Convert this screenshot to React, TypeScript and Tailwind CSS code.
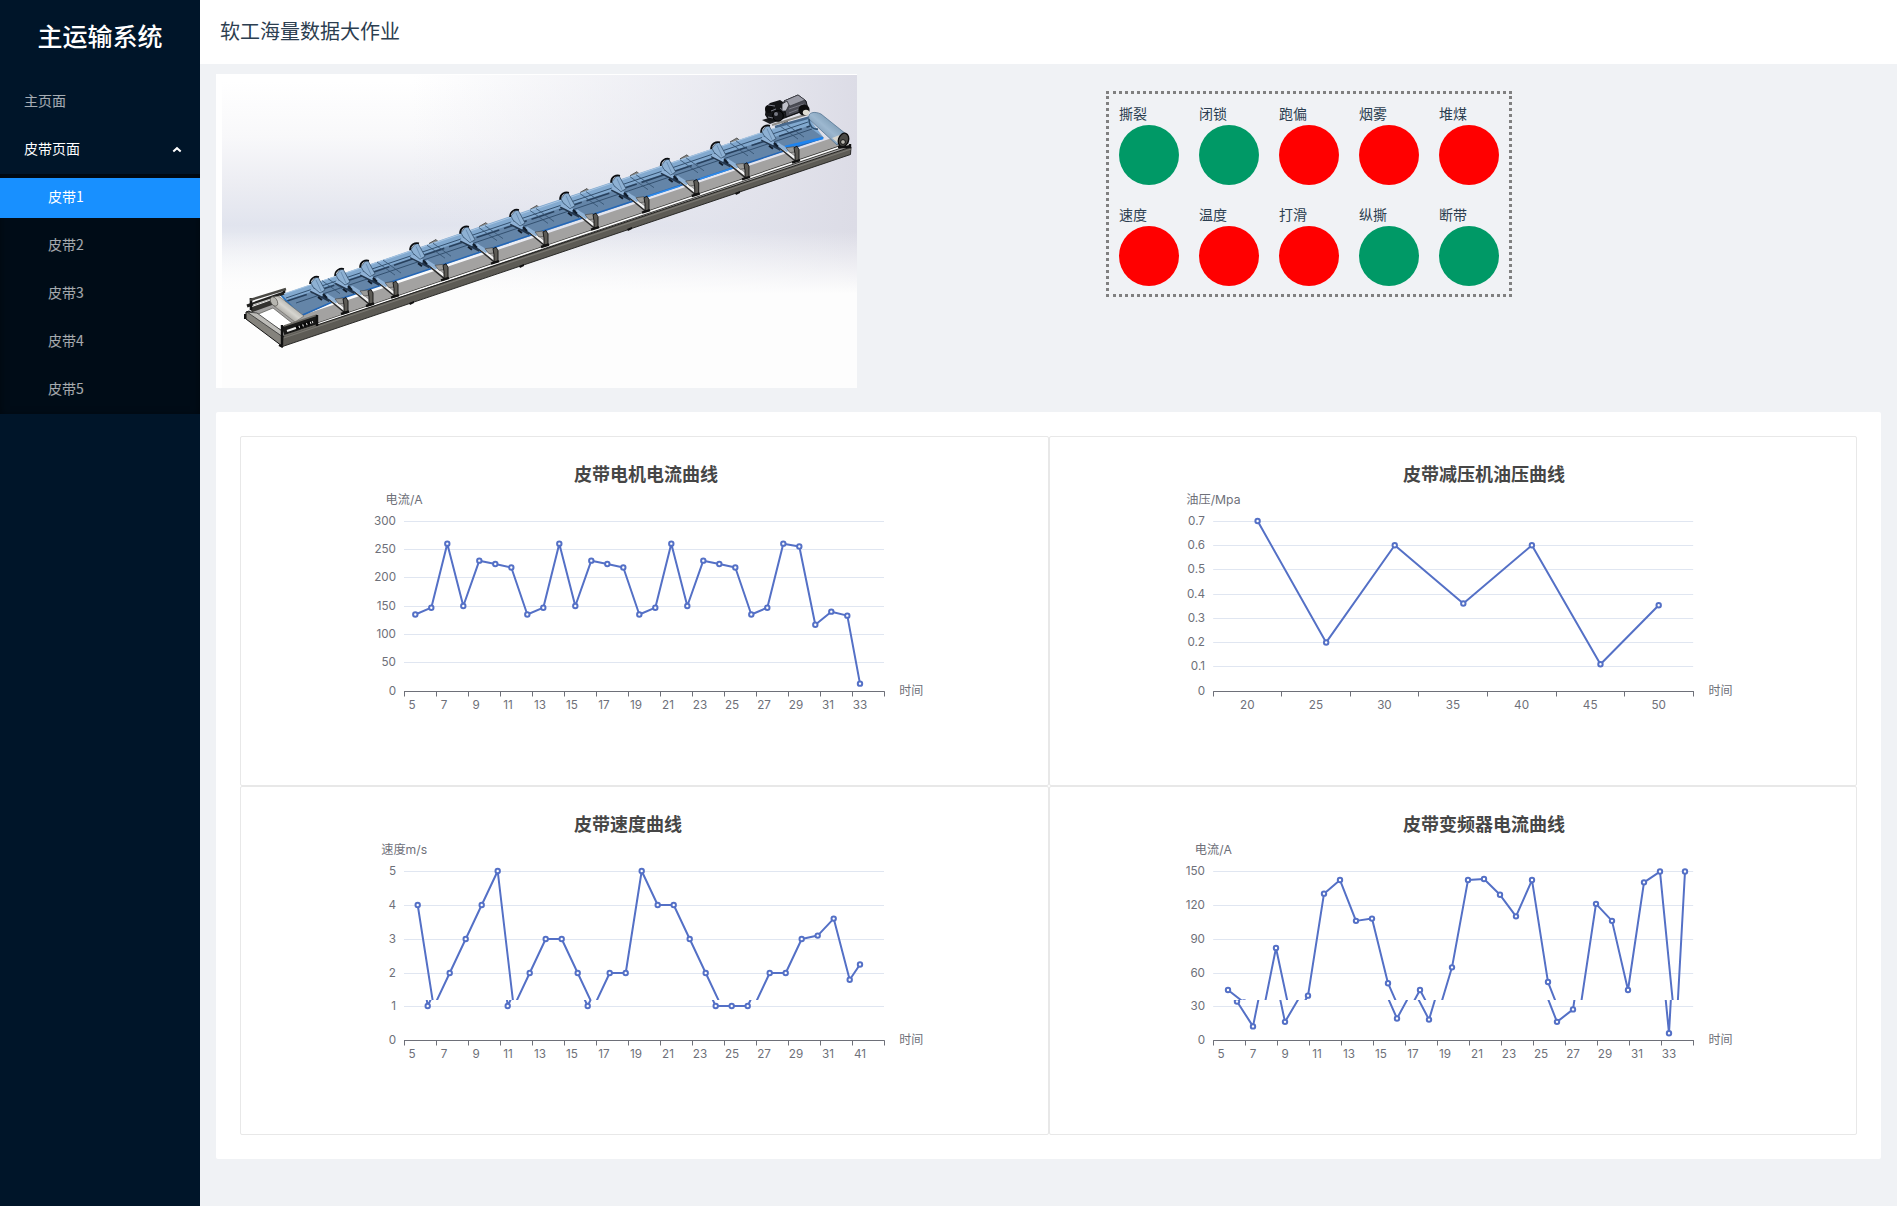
import React from "react";

type Pt = [number, number];

const AXIS = "#6E7079";
const LINE = "#5470C6";

interface ChartProps {
  id: string;
  title: string;
  yName: string;
  ox: number;
  oy: number;
  left: number;
  titleX: number;
  base: number;
  yLabels: string[];
  gridY: number[];
  labelRight: number;
  xLabels: string[];
  step: number;
  firstLabel: number;
  points: Pt[];
  seam?: { y: number; dx: number; dy: number };
}

function Series({ points }: { points: Pt[] }) {
  return (
    <g>
      <polyline points={points.map((p) => p.join(",")).join(" ")} fill="none" stroke={LINE} strokeWidth={2} strokeLinejoin="bevel" />
      {points.map(([x, y], i) => (
        <circle key={i} cx={x} cy={y} r={2.2} fill="#fff" stroke={LINE} strokeWidth={2} />
      ))}
    </g>
  );
}

function Chart(p: ChartProps) {
  const right = p.left + 480;
  const ticks = p.xLabels.map((_, i) => p.left + i * p.step).concat(right);
  const h = p.seam ? 347 : 348;
  return (
    <svg className="block shrink-0" width={806} height={h} viewBox={`${p.ox} ${p.oy} 806 ${h}`}
      fontFamily='Inter, "Noto Sans CJK SC", sans-serif' fontSize={12} fill={AXIS}>
      <text x={p.titleX + 0.3} y={p.oy + 44} fontSize={18} fontWeight={700} fill="#464646" fontFamily='"Noto Sans CJK SC", sans-serif'>
        {p.title}
      </text>
      <text x={p.left + 0.2} y={p.oy + 67} textAnchor="middle" fontSize={12.2}>{p.yName}</text>
      {p.gridY.map((y, i) => (
        <g key={i}>
          {i > 0 && <path d={`M${p.left} ${y + 0.5}H${right}`} stroke="#E0E6F1" />}
          <text x={p.labelRight} y={y + 4} textAnchor="end" fontSize={11.7}>{p.yLabels[i]}</text>
        </g>
      ))}
      <path d={`M${p.left} ${p.base + 0.5}H${right + 0.7}`} stroke={AXIS} />
      {ticks.map((x, i) => (
        <path key={i} d={`M${Math.floor(x) + 0.5} ${p.base + 0.5}v5`} stroke={AXIS} />
      ))}
      {p.xLabels.map((t, i) => (
        <text key={i} x={p.firstLabel + i * p.step} y={p.base + 17.7} textAnchor="middle" fontSize={11.7}>{t}</text>
      ))}
      <text x={right + 15.3} y={p.base + 4.2}>时间</text>
      {p.seam ? (
        <>
          <clipPath id={`${p.id}-a`}><rect x={p.ox} y={p.oy} width={807} height={p.seam.y - p.oy} /></clipPath>
          <clipPath id={`${p.id}-b`}><rect x={p.ox} y={p.seam.y} width={807} height={100} /></clipPath>
          <g clipPath={`url(#${p.id}-a)`}><Series points={p.points} /></g>
          <g clipPath={`url(#${p.id}-b)`}>
            <g transform={`translate(${p.seam.dx} ${p.seam.dy})`}><Series points={p.points} /></g>
          </g>
        </>
      ) : (
        <Series points={p.points} />
      )}
    </svg>
  );
}

function series(values: number[], x0: number, step: number, lastX: number, base: number, perUnit: number): Pt[] {
  return values.map((v, i) => [i === values.length - 1 ? lastX : x0 + i * step, base - v * perUnit]);
}

const odd = (to: number) => Array.from({ length: (to - 5) / 2 + 1 }, (_, i) => String(5 + i * 2));

const motor = [135, 147, 260, 150, 230, 224, 218, 135, 147, 260, 150, 230, 224, 218, 135, 147, 260, 150, 230, 224, 218, 135, 147, 260, 255, 117, 140, 133, 13];
const oil = [0.7, 0.2, 0.6, 0.36, 0.6, 0.11, 0.353];
const speed = [4, 1, 2, 3, 4, 5, 1, 2, 3, 3, 2, 1, 2, 2, 5, 4, 4, 3, 2, 1, 1, 1, 2, 2, 3, 3.1, 3.6, 1.8, 2.25];
const inverter = [45, 34, 12, 82, 16, 40, 130, 142, 106, 108, 51, 19, 45, 18, 65, 142, 143, 129, 110, 142, 52, 16, 27, 121, 106, 45, 140, 149.5, 6, 149.5];

const charts: ChartProps[] = [
  {
    id: "motor", title: "皮带电机电流曲线", yName: "电流/A", ox: 241, oy: 437, left: 404, titleX: 573.7, base: 691,
    yLabels: ["0", "50", "100", "150", "200", "250", "300"], gridY: [691, 662, 634, 606, 577, 549, 521], labelRight: 396,
    xLabels: odd(33), step: 32, firstLabel: 412, points: series(motor, 415.3, 16, 860, 691, 170 / 300),
  },
  {
    id: "oil", title: "皮带减压机油压曲线", yName: "油压/Mpa", ox: 1050, oy: 437, left: 1213.2, titleX: 1402.7, base: 691,
    yLabels: ["0", "0.1", "0.2", "0.3", "0.4", "0.5", "0.6", "0.7"], gridY: [691, 666, 642, 618, 594, 569, 545, 521], labelRight: 1205,
    xLabels: ["20", "25", "30", "35", "40", "45", "50"], step: 480 / 7, firstLabel: 1247.3, points: series(oil, 1257.6, 480 / 7, 1658.7, 691, 170 / 0.7),
  },
  {
    id: "speed", title: "皮带速度曲线", yName: "速度m/s", ox: 241, oy: 787, left: 404, titleX: 573.7, base: 1040,
    yLabels: ["0", "1", "2", "3", "4", "5"], gridY: [1040, 1006, 973, 939, 905, 871], labelRight: 396,
    xLabels: [...odd(31), "41"], step: 32, firstLabel: 412, points: series(speed, 417.7, 16, 860, 1041, 34),
    seam: { y: 1000, dx: -6, dy: -1 },
  },
  {
    id: "inverter", title: "皮带变频器电流曲线", yName: "电流/A", ox: 1050, oy: 787, left: 1213.2, titleX: 1402.7, base: 1040,
    yLabels: ["0", "30", "60", "90", "120", "150"], gridY: [1040, 1006, 973, 939, 905, 871], labelRight: 1205,
    xLabels: odd(33), step: 32, firstLabel: 1221, points: series(inverter, 1228, 16, 1685, 1041, 34 / 30),
    seam: { y: 1000, dx: -7, dy: -1 },
  },
];

const idlers: Pt[] = [
  [766, 125.7], [716, 142.3], [665.7, 159], [616, 175.7], [565, 192.7], [515, 210],
  [465, 226.7], [415, 243.3], [365, 260.7], [340, 269], [315, 277],
];

function Idler({ x, y }: { x: number; y: number }) {
  return (
    <g transform={`translate(${x} ${y})`}>
      <path d="M13 20 31 35" stroke="#2a2a2a" strokeWidth={4.2} />
      <path d="M14 20 31 34" stroke="#f4f4f4" strokeWidth={2.6} />
      <path d="M-4 13 15 23" stroke="#23364d" strokeWidth={4.6} />
      <path d="M-4 12 8 18M11 18 22 25" stroke="#8fb2d6" strokeWidth={3.6} />
      <path d="M-4 6 0 1 3 0 10 13 5 16-2 10Z" fill="#8eb1d3" stroke="#2c4662" strokeWidth={0.7} />
      <path d="M1 3 6 14" stroke="#5b7fa5" strokeWidth={0.7} />
      <path d="M-5 7C-5 1 0-1 4 0" fill="none" stroke="#0b0d10" strokeWidth={1.7} />
      <path d="M20 22 28 21 30 26 24 27Z" fill="#9a9a98" stroke="#444" strokeWidth={0.6} />
      <path d="M28 22 31 20.500 33 24V35H29V28Z" fill="#5d5b56" stroke="#111" strokeWidth={0.9} />
      <path d="M26 37 34 34.500" stroke="#111" strokeWidth={2.4} />
      <path d="M8 17 12 21M3 20 7 23" stroke="#101c2b" strokeWidth={2} />
    </g>
  );
}

function Conveyor() {
  return (
    <svg className="block h-[314px] w-[641px]" viewBox="216 74 641 314">
      <defs>
        <linearGradient id="sky" x1="0" y1="0" x2="0" y2="1">
          <stop offset="0.02" stopColor="#ffffff" />
          <stop offset="0.2" stopColor="#f8f8fa" />
          <stop offset="0.36" stopColor="#ebecf2" />
          <stop offset="0.48" stopColor="#e1e4ee" />
          <stop offset="0.56" stopColor="#ebedf3" />
          <stop offset="0.68" stopColor="#fafafb" />
          <stop offset="0.78" stopColor="#ffffff" />
        </linearGradient>
        <linearGradient id="haze" x1="0" y1="0" x2="1" y2="0">
          <stop offset="0.3" stopColor="#e2e3ec" stopOpacity="0" />
          <stop offset="0.75" stopColor="#e2e3ec" stopOpacity="0.7" />
          <stop offset="1" stopColor="#dcdce6" />
        </linearGradient>
        <linearGradient id="floor" x1="0" y1="0" x2="0" y2="1">
          <stop offset="0.5" stopColor="#fdfdfd" stopOpacity="0" />
          <stop offset="0.7" stopColor="#fdfdfd" />
        </linearGradient>
        <linearGradient id="drum" x1="0" y1="1" x2="1" y2="0">
          <stop offset="0.15" stopColor="#77756f" />
          <stop offset="0.5" stopColor="#d6d5d0" />
          <stop offset="0.85" stopColor="#8d8c86" />
        </linearGradient>
        <linearGradient id="drumBlue" x1="0" y1="1" x2="1" y2="0">
          <stop offset="0.1" stopColor="#5f7d99" />
          <stop offset="0.5" stopColor="#9db8d0" />
          <stop offset="0.9" stopColor="#64869f" />
        </linearGradient>
      </defs>
      <rect x="216" y="74" width="641" height="314" fill="#fff" />
      <rect x="222" y="75" width="635" height="313" fill="url(#sky)" />
      <rect x="222" y="75" width="635" height="313" fill="url(#haze)" />
      <rect x="222" y="75" width="635" height="313" fill="url(#floor)" />

      {/* frame and deck */}
      <path d="M246 312 272 303 300 316 838 136 851 148 283 341 246 319Z" fill="#a3a2a1" />
      {[437, 487, 538, 588, 638, 688, 738, 788].map((x) => (
        <g key={x} transform={`translate(${x} ${401 - 0.3375 * x})`}>
          <path d="M-8-10 11 8 18 5-1-14Z" fill="#8b8a87" stroke="#3f3f3d" strokeWidth={0.8} />
        </g>
      ))}
      <path d="M292 333 849 144" stroke="#2f2f2d" strokeWidth={3.2} fill="none" />
      <path d="M300 330 849 144" stroke="#fcfcfc" strokeWidth={1.7} fill="none" />
      <path d="M281 337 851 147 850.500 154.500 281 347Z" fill="#5d5b55" stroke="#1d1d1b" strokeWidth={0.9} />
      <path d="M282 338.500 851 149" stroke="#7b7973" strokeWidth={1.2} />
      <path d="M409 303l5-2v2l-4 2zM519 266l5-2v2l-4 2zM627 229l5-2v2l-4 2zM735 193l5-2v2l-4 2z" fill="#111" />

      {/* belt */}
      <path d="M280 295 540 206 808 117 824 138 540 233 337 300 298 318Z" fill="#82a9cf" />
      <path d="M281 302 540 215 808 126 824 138 540 232 337 300 300 317Z" fill="#6485a8" />
      <path d="M286 298 808 122M296 303 812 129" stroke="#33506f" strokeWidth={1} />
      <path d="M284 302 810 126" stroke="#27405d" strokeWidth={1.6} strokeDasharray="24 5" />
      <path d="M282 294.500 808 117" stroke="#a8c6e3" strokeWidth={1} />
      {[330, 385, 435, 487, 538, 588, 638, 688, 738, 788].map((x) => (
        <path key={x} d={`M${x - 8} ${392 - 0.3375 * x}l18 13M${x - 2} ${390 - 0.3375 * x}l18 13`} stroke="#34516f" strokeWidth={0.8} />
      ))}
      <path d="M281 295 299 314" stroke="#2b71bb" strokeWidth={1.6} />
      <path d="M298 317 337 300 430 269 540 232 823 138" stroke="#2467b7" strokeWidth={1.5} fill="none" />
      <path d="M785 147 823 138" stroke="#1d84f0" strokeWidth={2.6} />
      <path d="M640 199 680 186M700 179 745 164" stroke="#2e8bec" strokeWidth={1.4} />

      {idlers.map(([x, y]) => <Idler key={x} x={x} y={y} />)}

      {/* tail end */}
      <path d="M246 312 249 311 283 336 282 346 246 319Z" fill="#85837d" stroke="#111" strokeWidth={1} />
      <path d="M256 315 273 308 292 323 281 330Z" fill="#fff" stroke="#55544f" strokeWidth={0.7} />
      <path d="M247 312 257 313 282 331 283 337Z" fill="#bdbcb8" stroke="#333" strokeWidth={0.8} />
      <path d="M247 306 284 293" stroke="#222220" strokeWidth={3.2} />
      <path d="M251 310 276 301" stroke="#33322f" strokeWidth={5} />
      <path d="M253 305 280 296" stroke="#c9c9c6" strokeWidth={1.2} />
      <path d="M251 298V310M284 289V293" stroke="#151515" strokeWidth={2.6} />
      <path d="M250 300 286 289" stroke="#4a4944" strokeWidth={2.4} />
      <path d="M271 300C271 296 277 296 280 297L304 316 295 322 274 306Z" fill="url(#drum)" stroke="#66655f" strokeWidth={0.6} />
      <ellipse cx="274" cy="301.500" rx="3.200" ry="5" transform="rotate(-30 274 301.500)" fill="#b7b6b0" stroke="#55544f" strokeWidth={0.7} />
      <path d="M283 331 317 320" stroke="#1a1a19" strokeWidth={9} />
      <path d="M287 331 313 322" stroke="#f0f0ee" strokeWidth={2} />
      <path d="M284 326 317 315M284 336 317 325" stroke="#6d6b65" strokeWidth={1.8} />
      <path d="M282 325V345M317 315V326" stroke="#111" strokeWidth={2.4} />
      <path d="M296 328 312 322" stroke="#080808" strokeWidth={4} strokeDasharray="3 1" />
      <path d="M279 345l4 2M245 314v5" stroke="#111" strokeWidth={2} />

      {/* drive end */}
      <path d="M772 125 808 114" stroke="#8f8e8b" strokeWidth={2} />
      <path d="M775 127 811 117" stroke="#47688c" strokeWidth={2.4} />
      <path d="M809 119C807 112 815 111 821 114L846 134 837 145Z" fill="url(#drumBlue)" stroke="#496b8b" strokeWidth={0.7} />
      <path d="M809 119C809 126 813 130 818 129" fill="none" stroke="#30506f" strokeWidth={1.6} />
      <path d="M832 138 842 134 847 141 839 144Z" fill="#d8d6cf" />
      <ellipse cx="843.500" cy="140" rx="5" ry="7" transform="rotate(18 843.500 140)" fill="#4b4a46" stroke="#0c0c0c" strokeWidth={1.4} />
      <circle cx="843" cy="142" r="2.400" fill="#b8b6ae" stroke="#111" />
      <path d="M838 147H850V144" stroke="#111" strokeWidth={2.4} fill="none" />

      {/* motor */}
      <path d="M762 120 805 107 807 110 770 124Z" fill="#1c1d20" />
      <path d="M784 101 798 95 806 101 808 109 786 117Z" fill="#4b4c55" stroke="#111216" strokeWidth={1} />
      <path d="M784 101 798 95 805 100 790 106Z" fill="#9a9ba6" stroke="#34353c" strokeWidth={0.7} />
      <path d="M789 109 804 104M789 113 802 108" stroke="#797a85" strokeWidth={1} />
      <path d="M766 107 770 103 780 100 786 104 785 113 779 121 769 121 765 115Z" fill="#141518" />
      <circle cx="769" cy="109" r="4" fill="#0c0c0e" />
      <circle cx="778" cy="116" r="5.300" fill="#18191d" stroke="#000" />
      <circle cx="776" cy="114" r="2" fill="#777984" />
      <path d="M782 104l5-3 2 4-3 6-4 0z" fill="#c0c1ca" stroke="#25262b" strokeWidth={0.8} />
      <path d="M768 105l7 1M771 111l5-2M768 117l5 1M780 108l4 3" stroke="#898b97" strokeWidth={0.9} />
      <circle cx="804" cy="110" r="5.600" fill="#0d0d0e" />
      <ellipse cx="806" cy="112.500" rx="3.200" ry="2.800" fill="#dedcd3" />
    </svg>
  );
}

const alarms: [string, boolean][] = [
  ["撕裂", true], ["闭锁", true], ["跑偏", false], ["烟雾", false], ["堆煤", false],
  ["速度", false], ["温度", false], ["打滑", false], ["纵撕", true], ["断带", true],
];

function DottedFrame() {
  return (
    <svg className="pointer-events-none absolute inset-0" width={406} height={206} stroke="#808080" strokeWidth={3} strokeDasharray="3 3">
      <path d="M0 1.500H3M0 204.500H3" />
      <path d="M7 1.500H406M7 204.500H406M1.500 5V203M404.500 5V203" />
    </svg>
  );
}

export default function App() {
  return (
    <div className="flex h-[1208px] flex-col bg-white font-['Noto_Sans_CJK_SC',sans-serif] text-[#2c3e50]">
      <div className="flex h-[1206px] bg-[#f0f2f5]">
        <aside className="w-[200px] shrink-0 bg-[#001529] text-sm text-white/65">
          <h1 className="flex h-[77px] items-center justify-center pb-[5px] text-[25px] font-medium text-white">主运输系统</h1>
          <nav>
            <div className="mt-1 flex h-10 items-center px-6 pb-[3px]">主页面</div>
            <div className="mt-2 flex h-10 items-center justify-between pr-[18px] pb-[3px] pl-6 text-white">
              皮带页面
              <svg className="mt-[5px] h-2 w-[10px]" viewBox="0 0 10 8" fill="none" stroke="currentColor" strokeWidth={2}>
                <path d="M1.300 5.500 5 2.200 8.700 5.500" />
              </svg>
            </div>
            <div className="mt-[5px] flex h-[240px] flex-col gap-2 bg-[#000c17] pt-1 shadow-[inset_0_2px_8px_rgba(0,0,0,0.45)]">
              {[1, 2, 3, 4, 5].map((n) => (
                <div key={n} className={n === 1 ? "flex h-10 items-center bg-[#1890ff] pb-1 pl-12 text-white" : "flex h-10 items-center pb-1 pl-12"}>
                  皮带{n}
                </div>
              ))}
            </div>
          </nav>
        </aside>

        <div className="flex min-w-0 grow flex-col">
          <header className="flex h-16 shrink-0 items-center bg-white pb-[3px] pl-5 text-xl">软工海量数据大作业</header>
          <main className="flex flex-col px-4 pt-[10px]">
            <div className="flex h-[314px]">
              <Conveyor />
              <div className="relative mt-[17px] ml-[249px] grid h-[206px] w-[406px] grid-cols-[repeat(5,60px)] content-start gap-x-5 gap-y-[17px] pt-[11px] pl-[13px]">
                <DottedFrame />
                {alarms.map(([name, ok]) => (
                  <div key={name} className="h-[84px] text-sm leading-[22px]">
                    <div className="pb-px">{name}</div>
                    <div className={ok ? "size-[60px] rounded-full bg-[#009966]" : "size-[60px] rounded-full bg-[#ff0000]"} />
                  </div>
                ))}
              </div>
            </div>
            <section className="mt-6 grid grid-cols-[809px_808px] rounded-xs bg-white p-6">
              {charts.map((c) => (
                <div key={c.id} className="overflow-hidden rounded-xs border border-[#e8e8e8]">
                  <Chart {...c} />
                </div>
              ))}
            </section>
          </main>
        </div>
      </div>
    </div>
  );
}
